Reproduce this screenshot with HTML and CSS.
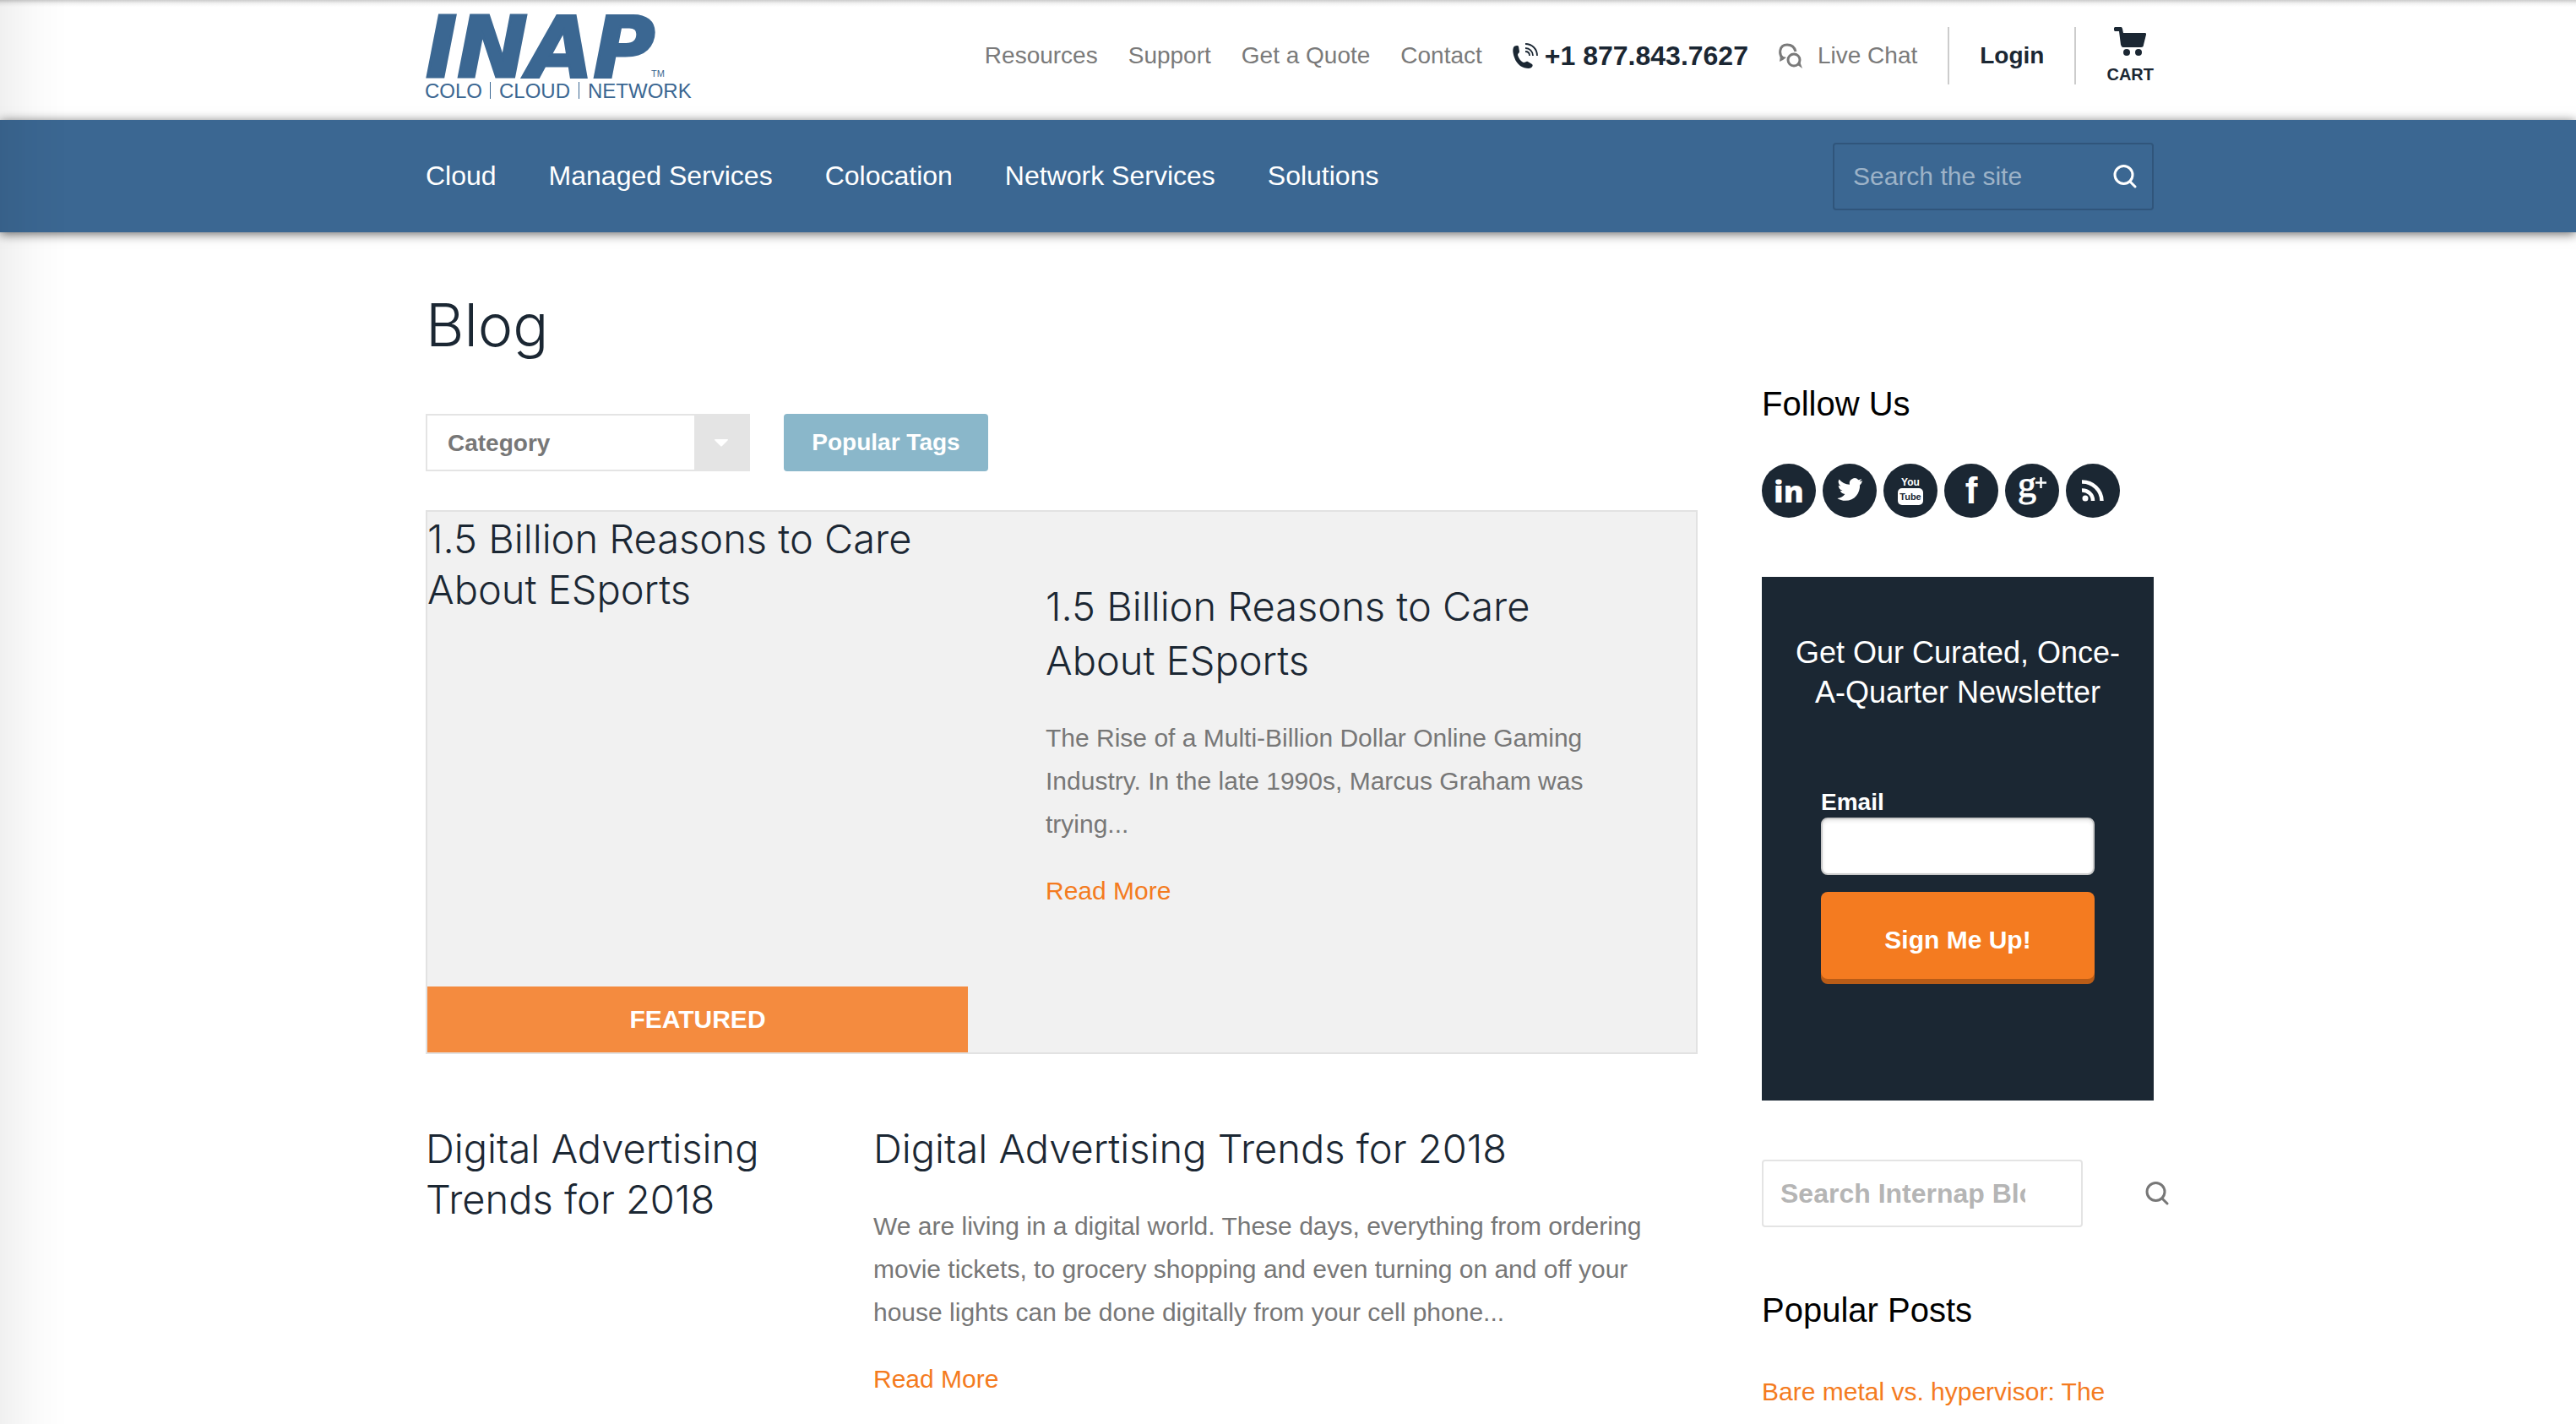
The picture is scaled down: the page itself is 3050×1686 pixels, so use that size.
FILE: index.html
```html
<!DOCTYPE html>
<html lang="en">
<head>
<meta charset="utf-8">
<title>Blog | INAP</title>
<link rel="stylesheet" href="styles.css">
</head>
<body>
<header class="topbar">
  <div class="container topbar-inner">
    <a class="logo" href="#" aria-label="INAP home">
      <svg width="324" height="112" viewBox="0 0 324 112">
        <text class="logo-name" x="0" y="76">INAP</text>
        <text class="logo-tm" x="267" y="76">TM</text>
        <text class="logo-tag" x="-1" y="101">COLO</text>
        <path d="M76.500 82v20M181.500 82v20" stroke="#3b6792" stroke-width="1"/>
        <text class="logo-tag" x="87" y="101">CLOUD</text>
        <text class="logo-tag" x="192" y="101">NETWORK</text>
      </svg>
    </a>
    <nav class="utility" aria-label="Utility">
      <a href="#">Resources</a>
      <a href="#">Support</a>
      <a href="#">Get a Quote</a>
      <a href="#">Contact</a>
      <a class="phone" href="#">
        <svg width="30" height="30" viewBox="0 0 30 30"><path fill="#1b2733" d="M1 5C2 3 6 2 7 4l1 6c0 2-2 2-2 4 1 4 4 8 7 9 2 0 3-2 5-1l5 3c2 2-1 5-4 5C12 30 5 26 2 17 0 11 0 8 1 5z"/><path fill="none" stroke="#1b2733" stroke-width="1.800" d="M15 1c8 0 14 6 14 14M15 6c5 0 9 4 9 9M15 10c3 0 5 2 5 5"/></svg>
        +1 877.843.7627</a>
      <a class="chat" href="#">
        <svg width="28" height="30" viewBox="0 0 28 30"><g fill="none" stroke="#7a7a7a" stroke-width="3"><path d="M5 18C0 14 0 2 10 2c6 0 9 4 10 8"/><circle cx="18" cy="20" r="7"/></g><path fill="#7a7a7a" d="M1 22l1-7 7 2-4 3zM21 25l4-3 3 8z"/></svg>
        Live Chat</a>
      <a class="login" href="#">Login</a>
      <a class="cart" href="#">
        <svg width="38" height="34" viewBox="0 0 38 34"><path fill="#1b2733" d="M2 0h6c2 0 2 2 3 7h26c1 0 1 1 1 2l-3 12c0 2-1 3-3 3H11c-2 0-2-1-3-3L6 5H2C-1 5-1 0 2 0z"/><circle cx="15" cy="30" r="4" fill="#1b2733"/><circle cx="29" cy="30" r="4" fill="#1b2733"/></svg>
        CART</a>
    </nav>
  </div>
</header>
<div class="navbar">
  <div class="container navbar-inner">
    <nav class="mainnav" aria-label="Main">
      <a href="#">Cloud</a>
      <a href="#">Managed Services</a>
      <a href="#">Colocation</a>
      <a href="#">Network Services</a>
      <a href="#">Solutions</a>
    </nav>
    <form class="sitesearch">
      <input type="text" placeholder="Search the site" aria-label="Search the site">
      <button type="button" aria-label="Search"><svg width="28" height="28" viewBox="0 0 28 28"><g fill="none" stroke="#fff" stroke-width="3" stroke-linecap="round"><circle cx="12.500" cy="12" r="10.500"/><path d="M20 20l6 6"/></g></svg></button>
    </form>
  </div>
</div>
<div class="container page">
  <main class="content">
    <h1>Blog</h1>
    <div class="filters">
      <div class="select">
        <select aria-label="Category"><option>Category</option></select>
        <span class="select-arrow"><svg width="16" height="9" viewBox="0 0 16 9"><path fill="#fff" d="M1 0h14q2 0 0 2L9 8q-1 1-2 0L1 2Q-1 0 1 0z"/></svg></span>
      </div>
      <button class="tags" type="button">Popular Tags</button>
    </div>
    <article class="featured">
      <div class="featured-media">
        <h2>1.5 Billion Reasons to Care About ESports</h2>
        <span class="ribbon">FEATURED</span>
      </div>
      <div class="featured-text">
        <h2>1.5 Billion Reasons to Care About ESports</h2>
        <p>The Rise of a Multi-Billion Dollar Online Gaming Industry. In the late 1990s, Marcus Graham was trying...</p>
        <a href="#">Read More</a>
      </div>
    </article>
    <article class="post">
      <h2>Digital Advertising Trends for 2018</h2>
      <div class="post-text">
        <h2>Digital Advertising Trends for 2018</h2>
        <p>We are living in a digital world. These days, everything from ordering movie tickets, to grocery shopping and even turning on and off your house lights can be done digitally from your cell phone...</p>
        <a href="#">Read More</a>
      </div>
    </article>
  </main>
  <aside class="sidebar">
    <h3>Follow Us</h3>
    <div class="social">
      <a href="#" aria-label="LinkedIn"><svg viewBox="0 0 64 64"><circle cx="32" cy="32" r="32"/><text class="ico-in" x="32" y="46">in</text></svg></a>
      <a href="#" aria-label="Twitter"><svg viewBox="0 0 64 64"><circle cx="32" cy="32" r="32"/><path fill="#fff" d="M47 20c-1 .6-2.200.9-3.400 1 1.200-.8 2.100-1.900 2.600-3.200-1.200.7-2.400 1.200-3.800 1.400a6.100 6.100 0 0 0-10.400 5.600c-5-.3-9.500-2.700-12.500-6.400a6.100 6.100 0 0 0 1.900 8.100c-1 0-1.900-.3-2.700-.8 0 3 2 5.400 4.800 6-.9.200-1.800.3-2.700.1.800 2.400 3 4.100 5.600 4.200A12 12 0 0 1 17.400 41c2.700 1.900 6 2.800 9.400 2.800 11.500 0 17.600-9.400 17.300-18.600 1.200-.8 2.200-1.900 2.900-5.200z"/></svg></a>
      <a href="#" aria-label="YouTube"><svg viewBox="0 0 64 64"><circle cx="32" cy="32" r="32"/><text class="ico-yt" x="32" y="26">You</text><rect x="17" y="29" width="30" height="20" rx="5" fill="#fff"/><text class="ico-yt ico-tube" x="32" y="43">Tube</text></svg></a>
      <a href="#" aria-label="Facebook"><svg viewBox="0 0 64 64"><circle cx="32" cy="32" r="32"/><text class="ico-f" x="32" y="47">f</text></svg></a>
      <a href="#" aria-label="Google Plus"><svg viewBox="0 0 64 64"><circle cx="32" cy="32" r="32"/><text class="ico-g" x="26" y="39">g</text><path stroke="#fff" stroke-width="2.500" d="M42.500 16v13M36 22.500h13"/></svg></a>
      <a href="#" aria-label="RSS"><svg viewBox="0 0 64 64"><circle cx="32" cy="32" r="32"/><circle cx="23" cy="41" r="3.500" fill="#fff"/><path fill="none" stroke="#fff" stroke-width="4.500" d="M19 31.500A12.500 12.500 0 0 1 32 44M19 21.500A23 23 0 0 1 42.500 44"/></svg></a>
    </div>
    <form class="newsletter">
      <h4>Get Our Curated, Once-A-Quarter Newsletter</h4>
      <label for="email">Email</label>
      <input id="email" type="email">
      <button type="button">Sign Me Up!</button>
    </form>
    <form class="blogsearch">
      <input type="text" placeholder="Search Internap Blog" aria-label="Search Internap Blog">
      <button type="button" aria-label="Search blog"><svg width="28" height="28" viewBox="0 0 28 28"><g fill="none" stroke="#777" stroke-width="3" stroke-linecap="round"><circle cx="12.500" cy="12" r="10.500"/><path d="M20 20l6 6"/></g></svg></button>
    </form>
    <h3>Popular Posts</h3>
    <a class="popular" href="#">Bare metal vs. hypervisor: The</a>
  </aside>
</div>
</body>
</html>
```
FILE: styles.css
```css
* { box-sizing: border-box; }
body {
  margin: 0;
  background: #fff;
  color: #777;
  font-family: "Liberation Sans", Arial, sans-serif;
  font-size: 30px;
  line-height: 51px;
}
/* soft shade along the left window edge */
body::before {
  content: "";
  position: fixed;
  inset: 0 auto 0 0;
  width: 80px;
  background: linear-gradient(to right, rgba(0,0,0,.06), rgba(0,0,0,.02) 50%, transparent);
  pointer-events: none;
  z-index: 2;
}
h1, h2, h3, h4, p { margin: 0; }
a { color: #f47b20; text-decoration: none; }
input, button, select { font-family: inherit; margin: 0; }
svg { display: block; flex: none; }
.container {
  width: 100%;
  max-width: 2050px;
  margin: 0 auto;
  padding-left: 4px;
}

.topbar {
  height: 142px;
  background: linear-gradient(to bottom, #ccc, #f2f2f2 4px, #fff 8px);
}
.topbar-inner {
  display: flex;
  align-items: flex-start;
  justify-content: space-between;
  padding-top: 15px;
}
.logo-name {
  font: italic bold 100px "DejaVu Sans", sans-serif;
  fill: #3b6792;
  stroke: #3b6792;
  stroke-width: 3px;
}
.logo svg { overflow: visible; }
.logo-tag { font-size: 24px; fill: #3b6792; }
.logo-tm { font-size: 11px; fill: #3b6792; }
.utility {
  display: flex;
  align-items: center;
  gap: 36px;
  margin-top: 17px;
  font-size: 28px;
  line-height: 36px;
}
.utility a {
  display: flex;
  align-items: center;
  color: #7a7a7a;
}
.utility .phone {
  gap: 8px;
  color: #1b2733;
  font-size: 32px;
  font-weight: bold;
}
.utility .chat { gap: 18px; }
.utility .login {
  height: 68px;
  padding: 0 36px;
  border: solid #ccc;
  border-width: 0 2px;
  color: #1b2733;
  font-weight: bold;
}
.utility .cart {
  flex-direction: column;
  gap: 10px;
  color: #1b2733;
  font-size: 20px;
  font-weight: bold;
  line-height: 24px;
}

.navbar {
  background: #3b6792;
  box-shadow: 0 2px 12px rgba(0,0,0,.6);
}
.navbar-inner {
  display: flex;
  align-items: center;
  justify-content: space-between;
  min-height: 133px;
}
.mainnav { display: flex; gap: 62px; font-size: 32px; }
.mainnav a { color: #fff; }
.sitesearch {
  display: flex;
  align-items: center;
  width: 380px;
  height: 80px;
  padding: 0 18px 0 22px;
  border: 2px solid #30557b;
  border-radius: 4px;
}
.sitesearch input {
  flex: 1;
  min-width: 0;
  padding: 0;
  border: 0;
  background: none;
  color: #fff;
  font-size: 30px;
}
.sitesearch input::placeholder { color: #9db3c8; opacity: 1; }
.sitesearch button, .blogsearch button { padding: 0; border: 0; background: none; }

.page { display: flex; gap: 76px; padding-top: 66px; }
.content { flex: 1; min-width: 0; }
h1, h2 {
  color: #1b2733;
  font-family: Inter, "Liberation Sans", sans-serif;
  font-weight: 300;
}
h1 { font-size: 70px; line-height: 88px; }
h2 { font-size: 47px; line-height: 60px; }
.filters { display: flex; gap: 40px; margin: 61px 0 46px; }
.select {
  display: flex;
  width: 384px;
  height: 68px;
  border: 2px solid #e4e4e4;
}
.select select {
  flex: 1;
  appearance: none;
  padding: 0 24px;
  border: 0;
  background: #fff;
  color: #777;
  font-size: 28px;
  font-weight: bold;
}
.select-arrow {
  display: flex;
  align-items: center;
  justify-content: center;
  width: 64px;
  background: #e4e4e4;
}
.tags {
  width: 242px;
  height: 68px;
  padding: 0;
  border: 0;
  border-radius: 4px;
  background: #8ab7ca;
  color: #fff;
  font-size: 28px;
  font-weight: bold;
}
.featured {
  display: flex;
  min-height: 644px;
  border: 2px solid #e2e2e2;
  background: #f1f1f1;
}
.featured-media {
  display: flex;
  flex-direction: column;
  justify-content: space-between;
  flex: none;
  width: 640px;
  padding-top: 2px;
}
.ribbon {
  background: #f48b3f;
  color: #fff;
  font-weight: bold;
  line-height: 78px;
  text-align: center;
}
.featured-text { padding: 80px 80px 0 92px; }
.featured-text h2 { line-height: 64px; margin-bottom: 34px; }
.featured-text p, .post-text p { margin-bottom: 28px; }
.post {
  display: grid;
  grid-template-columns: 450px 1fr;
  gap: 80px;
  margin-top: 82px;
}
.post-text h2 { margin-bottom: 36px; }

.sidebar { flex: none; width: 464px; padding-top: 112px; }
h3 {
  color: #000;
  font-size: 40px;
  font-weight: normal;
  line-height: 50px;
  margin-bottom: 46px;
}
.social { display: flex; gap: 8px; }
.social svg { width: 64px; height: 64px; fill: #1b2733; }
.social text { fill: #fff; font-weight: bold; text-anchor: middle; }
.social .ico-in { font-family: "Open Sans", sans-serif; font-size: 36px; font-weight: 800; }
.social .ico-yt { font-size: 12px; }
.social .ico-tube { font-size: 11px; fill: #1b2733; }
.social .ico-f { font-size: 44px; }
.social .ico-g { font-family: "Liberation Serif", serif; font-size: 44px; font-weight: normal; stroke: #fff; stroke-width: 1px; }
.newsletter {
  display: flex;
  flex-direction: column;
  min-height: 620px;
  margin: 70px 0;
  padding: 66px 70px 0;
  background: #1b2733;
  color: #fff;
}
.newsletter h4 {
  margin: 0 -40px 88px;
  font-size: 36px;
  font-weight: normal;
  line-height: 47px;
  text-align: center;
}
.newsletter label { font-size: 28px; font-weight: bold; line-height: 37px; }
.newsletter input {
  height: 68px;
  padding: 0 16px;
  border: 2px solid #ccc;
  border-radius: 8px;
  background: #fff;
  box-shadow: inset 0 2px 4px rgba(0,0,0,.1);
  font-size: 28px;
}
.newsletter button {
  height: 103px;
  margin-top: 20px;
  padding: 10px 0 0;
  border: 0;
  border-radius: 8px;
  background: #f47b20;
  box-shadow: 0 6px 0 #b95c17;
  color: #fff;
  font-size: 30px;
  font-weight: bold;
}
.blogsearch { display: flex; align-items: center; gap: 74px; margin-bottom: 73px; }
.blogsearch input {
  flex: none;
  width: 380px;
  height: 80px;
  padding: 0 66px 0 20px;
  border: 2px solid #e4e4e4;
  border-radius: 4px;
  background: #fff;
  font-size: 32px;
  font-weight: bold;
}
.blogsearch input::placeholder { color: #b5b5b5; opacity: 1; }
```
